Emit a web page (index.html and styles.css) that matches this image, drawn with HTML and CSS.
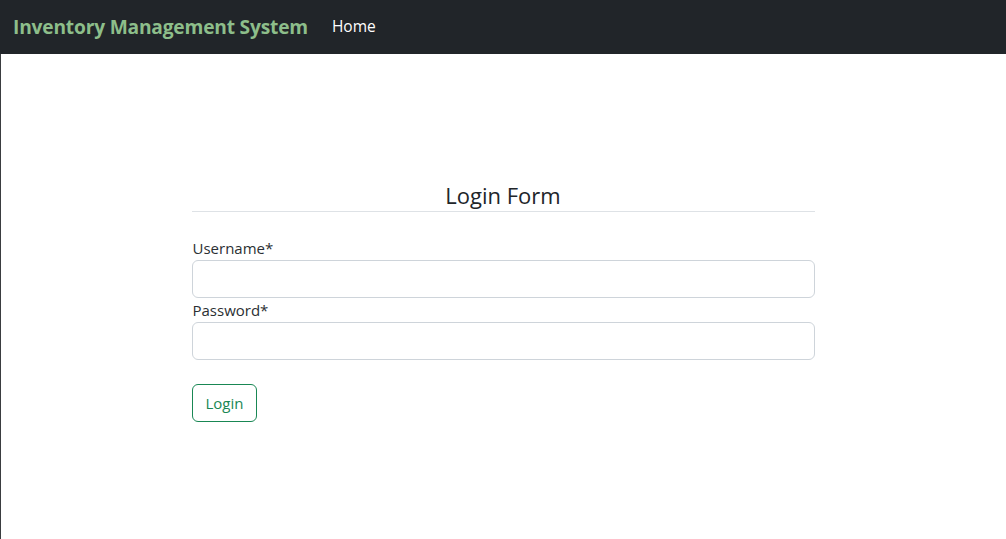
FILE: index.html
```html
<!DOCTYPE html>
<html lang="en">
<head>
<meta charset="utf-8">
<title>Inventory Management System</title>
<link rel="stylesheet" href="styles.css">
</head>
<body>
<nav class="navbar">
  <a class="brand" href="#">Inventory Management System</a>
  <a class="nav-link" href="#">Home</a>
</nav>
<main class="page">
  <section class="login">
    <h4 class="title">Login Form</h4>
    <form class="form">
      <label class="label" for="username">Username*</label>
      <input class="input" id="username" type="text">
      <label class="label" for="password">Password*</label>
      <input class="input" id="password" type="password">
      <button class="btn" type="button">Login</button>
    </form>
  </section>
</main>
</body>
</html>
```

FILE: styles.css
```css
* { box-sizing: border-box; }
html, body { margin: 0; height: 100%; }
body {
  font-family: "Open Sans", "Noto Sans", sans-serif;
  color: #212529;
  background: #fff;
  display: flex;
  flex-direction: column;
}
.navbar {
  height: 54px;
  background: #212529;
  display: flex;
  align-items: center;
  padding: 0 12px 2px 13px;
  gap: 24px;
}
.brand {
  color: #8dbe8a;
  font-weight: 700;
  font-size: 19.2px;
  text-decoration: none;
  letter-spacing: -0.2px;
}
.nav-link {
  color: #fff;
  font-size: 15.5px;
  text-decoration: none;
}
.page {
  flex: 1;
  border-left: 1px solid #3a3d40;
  display: flex;
  justify-content: center;
  padding-top: 126px;
}
.login {
  width: 623px;
  margin-left: -1px;
}
.title {
  margin: 0;
  font-weight: 400;
  font-size: 22px;
  text-align: center;
  line-height: 30px;
  padding-bottom: 1px;
  border-bottom: 1px solid #dee2e6;
}
.form {
  display: flex;
  flex-direction: column;
  align-items: flex-start;
  padding-top: 25px;
}
.label {
  font-size: 15px;
  line-height: 22px;
  padding-left: 1px;
  margin-bottom: 1px;
  color: #2b2f33;
}
.input {
  width: 100%;
  height: 38px;
  border: 1px solid #ced4da;
  border-radius: 6px;
  margin-bottom: 1px;
  font: inherit;
}
.btn {
  margin-top: 23px;
  height: 38px;
  padding: 0 13px;
  border: 1px solid #198754;
  border-radius: 6px;
  background: #fff;
  color: #198754;
  font-family: inherit;
  font-size: 15px;
}
```
